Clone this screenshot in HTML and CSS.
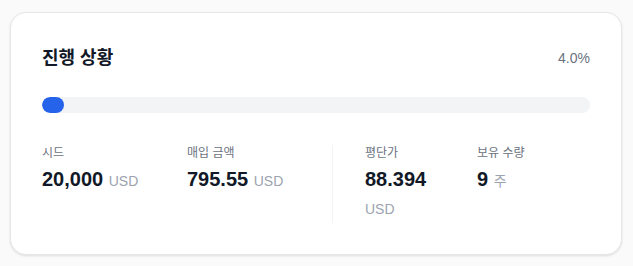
FILE: index.html
```html
<!DOCTYPE html>
<html lang="ko">
<head>
  <meta charset="UTF-8">
  <meta name="viewport" content="width=device-width, initial-scale=1.0">
  <title>진행 상황</title>
  <link rel="stylesheet" href="styles.css">
</head>
<body>
  <div class="progress-card">
    <div class="card-header">
      <h2 class="card-title">진행 상황</h2>
      <span class="card-percent">4.0%</span>
    </div>

    <div class="progress-track">
      <div class="progress-fill" style="width: 4%;"></div>
    </div>

    <div class="stats">
      <div class="stat">
        <div class="stat-label">시드</div>
        <div class="stat-value">20,000 <span class="stat-unit">USD</span></div>
      </div>
      <div class="stat">
        <div class="stat-label">매입 금액</div>
        <div class="stat-value">795.55 <span class="stat-unit">USD</span></div>
      </div>
      <div class="stat stat-divided">
        <div class="stat-label">평단가</div>
        <div class="stat-value">88.394 <span class="stat-unit">USD</span></div>
      </div>
      <div class="stat">
        <div class="stat-label">보유 수량</div>
        <div class="stat-value">9 <span class="stat-unit">주</span></div>
      </div>
    </div>
  </div>
</body>
</html>
```

FILE: styles.css
```css
body {
  margin: 0;
  padding: 12px 11px 12px 10px;
  background: #fafafa;
  color: #111827;
  font-family: "Liberation Sans", Arial, "Noto Sans CJK KR", sans-serif;
}

.progress-card {
  background: #ffffff;
  border: 1px solid #e5e7eb;
  border-radius: 16px;
  box-shadow: 0 1px 3px rgba(0, 0, 0, 0.08), 0 1px 2px rgba(0, 0, 0, 0.04);
  padding: 31px;
}

.card-header {
  display: flex;
  justify-content: space-between;
  align-items: center;
  margin-bottom: 25px;
}

.card-title {
  margin: 0;
  font-size: 18px;
  line-height: 28px;
  font-weight: 700;
  color: #111827;
}

.card-percent {
  font-size: 14px;
  line-height: 20px;
  color: #6b7280;
}

.progress-track {
  height: 16px;
  background: #f3f4f6;
  border-radius: 9999px;
  overflow: hidden;
  margin-bottom: 32px;
}

.progress-fill {
  height: 100%;
  background: #2563eb;
  border-radius: 9999px;
}

.stats {
  display: grid;
  grid-template-columns: repeat(4, 1fr);
  gap: 32px;
}

.stat-divided {
  border-left: 1px solid #f3f4f6;
  padding-left: 32px;
}

.stat-label {
  font-size: 12px;
  line-height: 16px;
  color: #6b7280;
}

.stat-value {
  margin-top: 4px;
  font-size: 20px;
  line-height: 28px;
  font-weight: 700;
  color: #111827;
}

.stat-unit {
  font-size: 14px;
  font-weight: 400;
  color: #9ca3af;
}
```
